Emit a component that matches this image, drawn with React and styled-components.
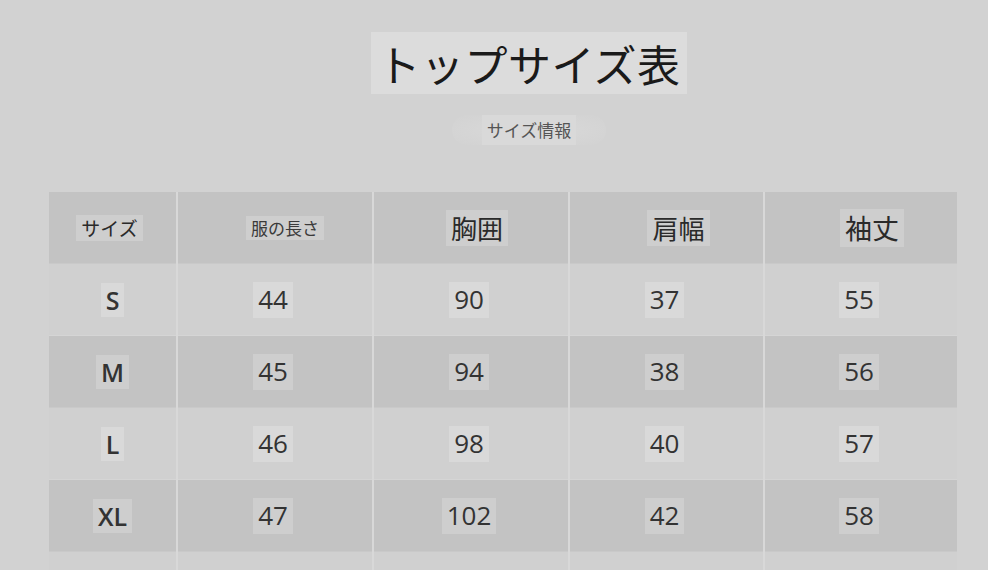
import styled, { createGlobalStyle } from 'styled-components';

const GlobalStyle = createGlobalStyle`
    html, body {
        margin: 0;
        padding: 0;
        background: #d2d2d2;
    }
    body {
        font-family: "Noto Sans CJK JP", "Noto Sans", sans-serif;
        color: #2e2e2e;
    }
`;

const Page = styled.div`
    width: 988px;
    height: 570px;
    overflow: hidden;
    background: #d2d2d2;
`;

const Heading = styled.header`
    display: flex;
    flex-direction: column;
    align-items: center;
    padding: 32px 0 0 70px;
    height: 192px;
    box-sizing: border-box;
`;

const Title = styled.h1`
    margin: 0;
    height: 62px;
    padding: 0 6px;
    display: flex;
    align-items: center;
    font-size: 43px;
    font-weight: 400;
    letter-spacing: 0.5px;
    color: #1a1a1a;
    background: #dcdcdc;
`;

const SubtitleWrap = styled.div`
    margin-top: 21px;
    padding: 0 30px;
    border-radius: 40px;
    background: radial-gradient(ellipse at center, #dadada 0%, #d5d5d5 60%, rgba(210, 210, 210, 0) 100%);
`;

const Subtitle = styled.span`
    display: block;
    height: 30px;
    line-height: 30px;
    padding: 0 5px;
    font-size: 17px;
    color: #555;
    background: #d9d9d9;
`;

const Grid = styled.div`
    margin-left: 49px;
    width: 908px;
    display: grid;
    grid-template-columns: 127px 194px 194px 193px 192px;
    grid-auto-rows: 72px;
    column-gap: 2px;
    background: #d8d8d8;
`;

const Cell = styled.div`
    display: flex;
    align-items: center;
    justify-content: center;
    background: ${p => (p.$dark ? '#c3c3c3' : '#d0d0d0')};
    box-shadow: inset 0 -1px 0 ${p => (p.$dark ? '#c9c9c9' : '#d5d5d5')};
`;

const Label = styled.span`
    padding: 1px 5px;
    line-height: 1.3;
    font-family: ${p => (p.$latin ? '"Open Sans", "Noto Sans", sans-serif' : 'inherit')};
    font-size: ${p => p.$size}px;
    font-weight: ${p => p.$weight || 400};
    color: ${p => p.$color || '#333'};
    background: ${p => (p.$dark ? '#cecece' : '#d9d9d9')};
    margin-left: ${p => p.$shift || 0}px;
`;

const headers = [
    { text: 'サイズ', size: 19, color: '#2a2a2a', shift: -6 },
    { text: '服の長さ', size: 17, color: '#3a3a3a', shift: 20 },
    { text: '胸囲', size: 26, color: '#2a2a2a', shift: 12 },
    { text: '肩幅', size: 26, color: '#2a2a2a', shift: 24 },
    { text: '袖丈', size: 27, color: '#2a2a2a', shift: 22 },
];

const rows = [
    ['S', '44', '90', '37', '55'],
    ['M', '45', '94', '38', '56'],
    ['L', '46', '98', '40', '57'],
    ['XL', '47', '102', '42', '58'],
];

function App() {
    return (
        <Page>
            <GlobalStyle />
            <Heading>
                <Title>トップサイズ表</Title>
                <SubtitleWrap>
                    <Subtitle>サイズ情報</Subtitle>
                </SubtitleWrap>
            </Heading>
            <Grid>
                {headers.map((h, i) => (
                    <Cell key={'h' + i} $dark>
                        <Label $size={h.size} $color={h.color} $shift={h.shift} $dark>{h.text}</Label>
                    </Cell>
                ))}
                {rows.map((row, r) =>
                    row.map((value, c) => (
                        <Cell key={r + '-' + c} $dark={r % 2 === 1}>
                            <Label
                                $latin
                                $size={c === 0 ? 25 : 26}
                                $weight={c === 0 ? 600 : 400}
                                $shift={c === 0 ? 0 : -4}
                                $dark={r % 2 === 1}
                            >
                                {value}
                            </Label>
                        </Cell>
                    ))
                )}
                {headers.map((h, i) => (
                    <Cell key={'f' + i} />
                ))}
            </Grid>
        </Page>
    );
}

export default App;
